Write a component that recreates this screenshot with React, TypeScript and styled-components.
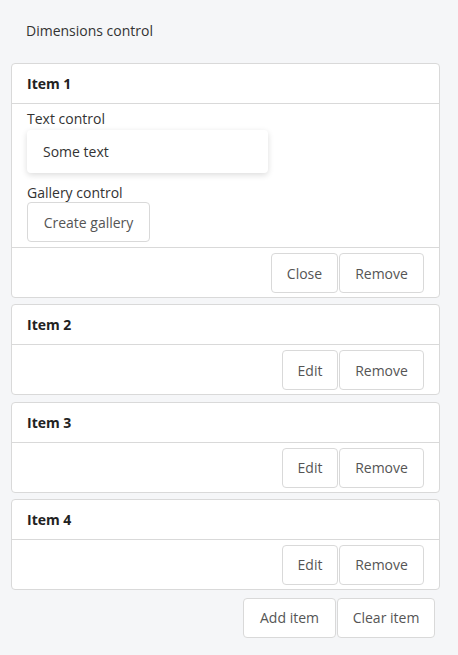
import React from "react";
import styled, { createGlobalStyle } from "styled-components";

const GlobalStyle = createGlobalStyle`
  html, body {
    margin: 0;
    padding: 0;
    background: #f5f6f8;
    font-family: "Open Sans", "Noto Sans", Arial, sans-serif;
    font-size: 14px;
    color: #333;
  }
  * { box-sizing: border-box; }
`;

const Page = styled.div`
  padding: 21px 18px 17px 11px;
  width: 458px;
`;

const Title = styled.div`
  margin-left: 15px;
  line-height: 20px;
  font-size: 14px;
  color: #333;
  margin-bottom: 22px;
`;

const List = styled.div`
  display: flex;
  flex-direction: column;
  gap: 6.3px;
`;

const Card = styled.div`
  background: #fff;
  border: 1px solid #d9d9d9;
  border-radius: 4px;
`;

const CardHeader = styled.div`
  height: 40px;
  display: flex;
  align-items: center;
  padding: 0 15px;
  font-weight: 700;
  font-size: 14px;
  color: #222;
  border-bottom: 1px solid #d9d9d9;
`;

const CardBody = styled.div`
  padding: 5px 15px 5px 15px;
  border-bottom: 1px solid #d9d9d9;
  display: flex;
  flex-direction: column;
  align-items: flex-start;
`;

const Label = styled.div<{ $tight?: boolean }>`
  line-height: ${(p) => (p.$tight ? "18px" : "20px")};
  color: #333;
`;

const TextBox = styled.div`
  width: 241px;
  height: 43px;
  margin-top: 1px;
  margin-bottom: 11px;
  display: flex;
  align-items: center;
  padding: 0 16px;
  border-radius: 4px;
  background: #fff;
  box-shadow: 0 2px 6px rgba(0, 0, 0, 0.14);
  color: #333;
`;

const CardFooter = styled.div`
  display: flex;
  justify-content: flex-end;
  gap: 1px;
  padding: 5px 15px 4px 15px;
`;

const Button = styled.button<{ $w?: number }>`
  height: 40px;
  ${(p) => (p.$w ? `width: ${p.$w}px;` : "")}
  padding: 0;
  white-space: nowrap;
  background: #fff;
  border: 1px solid #d9d9d9;
  border-radius: 4px;
  font-family: inherit;
  font-size: 14px;
  color: #555;
  cursor: pointer;
`;

const Actions = styled.div`
  display: flex;
  justify-content: flex-end;
  gap: 1px;
  margin-top: 8px;
  padding-right: 5px;
`;

const items = ["Item 2", "Item 3", "Item 4"];

export default function App() {
  return (
    <>
      <GlobalStyle />
      <Page>
        <Title>Dimensions control</Title>
        <List>
          <Card>
            <CardHeader>Item 1</CardHeader>
            <CardBody>
              <Label>Text control</Label>
              <TextBox>Some text</TextBox>
              <Label $tight>Gallery control</Label>
              <Button $w={123}>Create gallery</Button>
            </CardBody>
            <CardFooter>
              <Button $w={67}>Close</Button>
              <Button $w={85}>Remove</Button>
            </CardFooter>
          </Card>
          {items.map((name) => (
            <Card key={name}>
              <CardHeader>{name}</CardHeader>
              <CardFooter>
                <Button $w={56}>Edit</Button>
                <Button $w={85}>Remove</Button>
              </CardFooter>
            </Card>
          ))}
        </List>
        <Actions>
          <Button $w={93}>Add item</Button>
          <Button $w={98}>Clear item</Button>
        </Actions>
      </Page>
    </>
  );
}
